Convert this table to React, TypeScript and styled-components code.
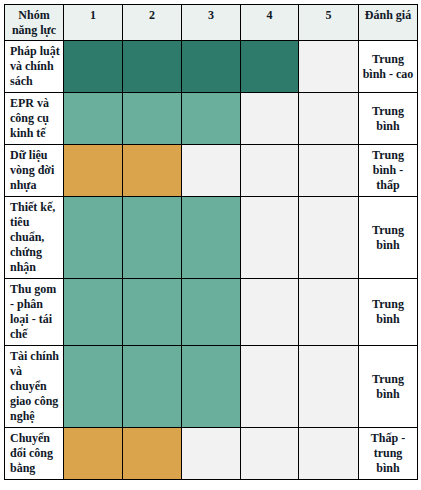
import React from "react";
import styled, { createGlobalStyle } from "styled-components";

const Global = createGlobalStyle`
  html, body { margin: 0; padding: 0; background: #ffffff; }
  body { font-family: "Liberation Serif", "Times New Roman", serif; }
`;

const Page = styled.div`
  padding: 4px;
  width: max-content;
`;

const Grid = styled.div`
  display: grid;
  grid-template-columns: 58px 58px 58px 58px 57px 59px 58px;
  gap: 1px;
  padding: 1px;
  background: #000000;
  font-family: "Liberation Serif", "Times New Roman", serif;
  font-weight: 700;
  font-size: 12px;
  line-height: 15px;
  color: #101828;
`;

const HeadCell = styled.div`
  background: #eaf1ee;
  padding: 3px 3px 2px;
  text-align: center;
`;

const LabelCell = styled.div`
  background: #ffffff;
  padding: 3px 2px 3px 5px;
  display: flex;
  align-items: center;
`;

type Level = "high" | "mid" | "low" | "none";

const levelColors: Record<Level, string> = {
  high: "#2e7b6b",
  mid: "#6aaf9b",
  low: "#d9a44b",
  none: "#f2f2f2",
};

const ScoreCell = styled.div<{ $level: Level }>`
  background: ${(p) => levelColors[p.$level]};
`;

const RatingCell = styled.div`
  background: #ffffff;
  padding: 3px;
  display: flex;
  align-items: center;
  justify-content: center;
  text-align: center;
`;

type Row = { label: string; score: number; level: Level; rating: string };

const rows: Row[] = [
  { label: "Pháp luật và chính sách", score: 4, level: "high", rating: "Trung bình - cao" },
  { label: "EPR và công cụ kinh tế", score: 3, level: "mid", rating: "Trung bình" },
  { label: "Dữ liệu vòng đời nhựa", score: 2, level: "low", rating: "Trung bình - thấp" },
  { label: "Thiết kế, tiêu chuẩn, chứng nhận", score: 3, level: "mid", rating: "Trung bình" },
  { label: "Thu gom - phân loại - tái chế", score: 3, level: "mid", rating: "Trung bình" },
  { label: "Tài chính và chuyển giao công nghệ", score: 3, level: "mid", rating: "Trung bình" },
  { label: "Chuyển đổi công bằng", score: 2, level: "low", rating: "Thấp - trung bình" },
];

const headers = ["Nhóm năng lực", "1", "2", "3", "4", "5", "Đánh giá"];

export default function App() {
  return (
    <>
      <Global />
      <Page>
        <Grid>
          {headers.map((h) => (
            <HeadCell key={h}>{h}</HeadCell>
          ))}
          {rows.map((r) => (
            <React.Fragment key={r.label}>
              <LabelCell>{r.label}</LabelCell>
              {[1, 2, 3, 4, 5].map((n) => (
                <ScoreCell key={n} $level={n <= r.score ? r.level : "none"} />
              ))}
              <RatingCell>{r.rating}</RatingCell>
            </React.Fragment>
          ))}
        </Grid>
      </Page>
    </>
  );
}
